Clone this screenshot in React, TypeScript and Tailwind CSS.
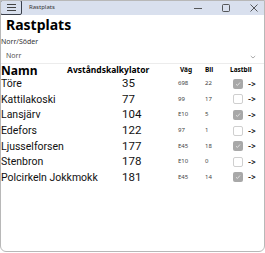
import React from "react";

const rows = [
  { n: "Töre", d: "35", v: "698", b: "22", l: true },
  { n: "Kattilakoski", d: "77", v: "99", b: "17", l: false },
  { n: "Lansjärv", d: "104", v: "E10", b: "5", l: true },
  { n: "Edefors", d: "122", v: "97", b: "1", l: false },
  { n: "Ljusselforsen", d: "177", v: "E45", b: "18", l: true },
  { n: "Stenbron", d: "178", v: "E10", b: "0", l: false },
  { n: "Polcirkeln Jokkmokk", d: "181", v: "E45", b: "14", l: true },
];

export default function App() {
  return (
    <div
      className="w-[265px] h-[253px] bg-white overflow-hidden relative"
      style={{ fontFamily: '"Noto Sans", "Open Sans", sans-serif' }}
    >
      <div className="absolute left-0 right-0 top-0 bottom-[1px] border border-[#b8b8b8] rounded-b-[6px] pointer-events-none" />
      {/* title bar */}
      <div className="h-[15px] bg-[#d9e0ee] flex items-center">
        <div className="w-[22px] h-[15px] border border-[#3a3f4a] rounded-[2px] flex flex-col items-center justify-center gap-[2px]">
          <div className="w-[9px] h-px bg-[#444]" />
          <div className="w-[9px] h-px bg-[#444]" />
          <div className="w-[9px] h-px bg-[#444]" />
        </div>
        <span className="ml-[7px] text-[6px] text-[#333]">Rastplats</span>
        <div className="ml-auto flex items-center gap-[20px] pr-[7px]">
          <svg width="8" height="8" viewBox="0 0 8 8"><path d="M0 4.5h8" stroke="#333" strokeWidth="0.8" /></svg>
          <svg width="8" height="8" viewBox="0 0 8 8"><rect x="0.5" y="0.5" width="7" height="7" rx="1" fill="none" stroke="#333" strokeWidth="0.8" /></svg>
          <svg width="8" height="8" viewBox="0 0 8 8"><path d="M0.5 0.5l7 7M7.5 0.5l-7 7" stroke="#333" strokeWidth="0.8" /></svg>
        </div>
      </div>
      <div className="px-[6px] text-[14px] font-bold leading-[20px] text-black">Rastplats</div>
      <div className="px-[1px] mt-[2px] text-[7px] leading-[10px] text-[#333]">Norr/Söder</div>
      <div className="mt-[1px] h-[16px] border-b border-[#ececec] flex items-center pt-[2px] px-[6px] text-[7px] text-[#555]">
        <span>Norr</span>
        <svg className="ml-auto mr-[3px]" width="6" height="4" viewBox="0 0 6 4"><path d="M0.8 1L3 3L5.2 1" fill="none" stroke="#888" strokeWidth="0.7" /></svg>
      </div>
      <div className="flex items-center h-[12px] text-black">
        <div className="w-[67px] pl-[1px] text-[12px] font-bold leading-[13px]">Namn</div>
        <div className="w-[113px] text-[8.5px] font-bold leading-[12px] whitespace-nowrap">Avståndskalkylator</div>
        <div className="w-[25px] text-[6.5px] font-bold leading-[10px]">Väg</div>
        <div className="w-[25px] text-[6.5px] font-bold leading-[10px]">Bil</div>
        <div className="text-[6.5px] font-bold leading-[10px]">Lastbil</div>
      </div>
      {rows.map((r) => (
        <div key={r.n} className="flex items-center h-[15.6px] text-[#111]" style={{ fontFamily: 'Roboto, "Noto Sans", sans-serif' }}>
          <div className="w-[122px] pl-[1px] text-[10.5px] leading-[15px] whitespace-nowrap">{r.n}</div>
          <div className="w-[56px] text-[11.5px] leading-[15px]">{r.d}</div>
          <div className="w-[27px] text-[6px] text-[#444]" style={{ fontFamily: '"Noto Sans", sans-serif' }}>{r.v}</div>
          <div className="w-[28px] text-[6px] text-[#444]" style={{ fontFamily: '"Noto Sans", sans-serif' }}>{r.b}</div>
          <div
            className={
              "w-[10px] h-[10px] rounded-[2px] flex items-center justify-center " +
              (r.l ? "bg-[#a8a8a8]" : "border border-[#cfcfcf] bg-white")
            }
          >
            {r.l && (
              <svg width="6" height="6" viewBox="0 0 6 6"><path d="M1 3.2L2.4 4.5L5 1.5" fill="none" stroke="#ececec" strokeWidth="0.8" /></svg>
            )}
          </div>
          <div className="ml-[5px] text-[9px] leading-[10px] font-medium">-&gt;</div>
        </div>
      ))}
    </div>
  );
}
